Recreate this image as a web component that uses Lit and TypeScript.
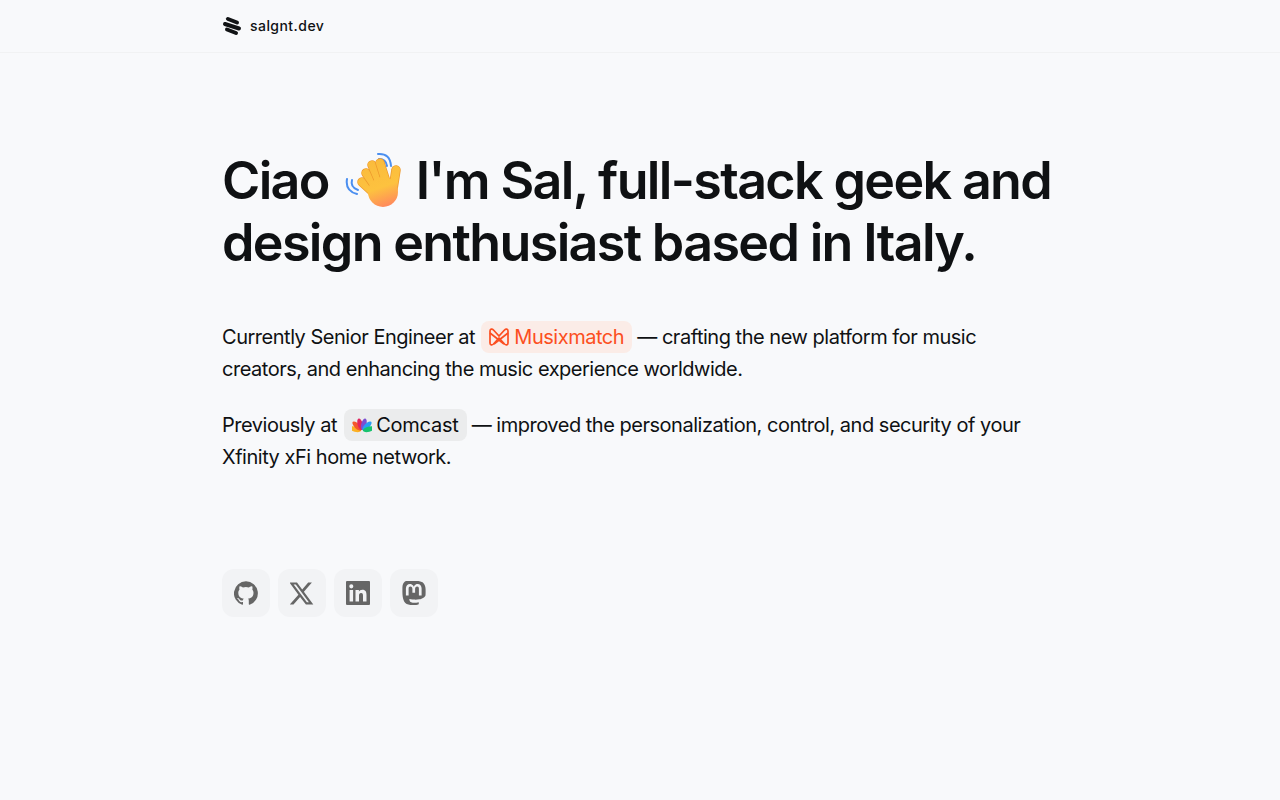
import { LitElement, html, css, svg } from 'lit';
import { customElement } from 'lit/decorators.js';

const fingers = ['M18 33 30 44', 'M22 24 33 40', 'M28 16 37 37', 'M36 14 43 36', 'M52 21 49 40'];

const hand = html`<svg class="wave" viewBox="0 0 60 60" aria-hidden="true">
  <defs><linearGradient id="h" gradientUnits="userSpaceOnUse" x1="24" y1="12" x2="40" y2="58"><stop offset="0" stop-color="#fabb3c"/><stop offset=".6" stop-color="#fdc23f"/><stop offset="1" stop-color="#ff8a5c"/></linearGradient></defs>
  <g fill="none" stroke="#4b8ff0" stroke-width="2" stroke-linecap="round">
    <path d="M3 30Q1 42 13 45"/><path d="M8 31Q6 38 14 41"/>
    <path d="M34 5Q46 4 47 17"/><path d="M35 10Q42 10 43 17"/>
  </g>
  <g fill="none" stroke-linecap="round">
    ${fingers.map((d) => svg`<path d="${d}" stroke="#ee9a2c" stroke-width="9.500"/><path d="${d}" stroke="url(#h)" stroke-width="8"/>`)}
  </g>
  <circle cx="39" cy="43" r="15" fill="url(#h)"/>
</svg>`;

const feathers = ['#fbb124', '#f5562c', '#e0245e', '#7a4fd1', '#2a9df4', '#17c26e'];

@customElement('app-root')
export class AppRoot extends LitElement {
  static styles = css`
    :host { display: block; min-height: 800px; background: #f8f9fb; color: #0f1113; font-family: Inter, 'Liberation Sans', sans-serif; }
    .top { height: 52px; border-bottom: 1px solid #f1f2f3; }
    .inner { width: 836px; margin: 0 auto; }
    .brand { height: 52px; display: flex; align-items: center; gap: 8px; font-size: 14px; font-weight: 500; letter-spacing: .45px; }
    .brand span { margin-top: -2px; }
    .brand svg { width: 20px; height: 20px; }
    main { padding-top: 96px; }
    h1 { margin: 0; font-size: 52px; line-height: 62px; font-weight: 600; letter-spacing: -1.65px; }
    .wave { width: 60px; height: 60px; margin-left: 4px; vertical-align: -10px; }
    .copy { margin-top: 47px; font-size: 20px; line-height: 32px; letter-spacing: -.48px; }
    .copy p { margin: 0 0 24px; }
    .pill { display: inline-flex; align-items: center; gap: 5px; height: 32px; padding: 0 8px; border-radius: 8px; vertical-align: top; }
    .pill svg { width: 20px; height: 20px; }
    .mm { background: #fbece7; color: #fc4f21; margin-left: 1px; }
    .cc { background: #ebeced; color: #0d0e10; gap: 4px; margin-left: 2px; letter-spacing: -.25px; }
    .links { display: flex; gap: 8px; margin-top: 96px; }
    .links a { width: 48px; height: 48px; border-radius: 12px; background: #f2f3f5; display: flex; align-items: center; justify-content: center; color: #666; }
    .links svg { width: 24px; height: 24px; fill: currentColor; }
  `;

  render() {
    return html`
      <header class="top"><div class="inner brand">
        <svg viewBox="0 0 20 20" fill="none" stroke="#111315" stroke-width="4" stroke-linecap="round"><path d="M6 3 15 6.500"/><path d="M3 8 17 12.500"/><path d="M5 13.500 14 17"/></svg>
        <span>salgnt.dev</span></div></header>
      <main class="inner">
        <h1>Ciao ${hand} I'm Sal, full-stack geek and design enthusiast based in Italy.</h1>
        <div class="copy">
          <p>Currently Senior Engineer at <span class="pill mm"><svg viewBox="0 0 20 20" fill="none" stroke="currentColor" stroke-width="1.700"><path d="M1 4C1 2 3 1.500 4.500 3L10 9l5.500-6C17 1.500 19 2 19 4v12c0 2-2 2.500-3.500 1L10 11l-5.500 6C3 18.500 1 18 1 16z"/><path d="M1 6 15 17M19 6 5 17"/></svg>Musixmatch</span> — crafting the new platform for music creators, and enhancing the music experience worldwide.</p>
          <p>Previously at <span class="pill cc"><svg viewBox="0 0 20 20">${feathers.map((c, i) => svg`<ellipse cx="10" cy="9" rx="2.600" ry="6" fill="${c}" transform="rotate(${-75 + i * 30} 10 16)"/>`)}</svg>Comcast</span> — improved the personalization, control, and security of your Xfinity xFi home network.</p>
        </div>
        <nav class="links">
          <a><svg viewBox="0 0 24 24"><path d="M12 .3a12 12 0 0 0-3.800 23.400c.6.1.8-.3.8-.6v-2c-3.300.7-4-1.600-4-1.600-.6-1.400-1.400-1.800-1.400-1.800-1-.7.1-.7.1-.7 1.200.1 1.800 1.200 1.800 1.200 1 1.800 2.800 1.300 3.500 1 .1-.8.4-1.300.8-1.600-2.700-.3-5.500-1.300-5.500-5.900 0-1.300.5-2.400 1.200-3.200-.1-.3-.5-1.500.1-3.200 0 0 1-.3 3.300 1.200a11.500 11.500 0 0 1 6 0c2.300-1.500 3.300-1.200 3.300-1.200.6 1.700.2 2.900.1 3.200.8.8 1.200 1.900 1.200 3.200 0 4.600-2.800 5.600-5.500 5.900.4.400.8 1.100.8 2.200v3.300c0 .3.2.7.8.6A12 12 0 0 0 12 .3z"/></svg></a>
          <a><svg viewBox="0 0 24 24"><path d="M18.200 1.500h3.700l-8 9.200 9.400 12.800h-7.400l-5.800-7.600-6.600 7.600H-.2l8.600-9.800L-.6 1.500H7l5.200 7zm-1.300 19.800h2L5.800 3.600H3.600z"/></svg></a>
          <a><svg viewBox="0 0 24 24"><path d="M23 0H1a1 1 0 0 0-1 1v22a1 1 0 0 0 1 1h22a1 1 0 0 0 1-1V1a1 1 0 0 0-1-1zM7.100 20.500H3.600V9h3.500zM5.300 7.400a2 2 0 1 1 0-4.100 2 2 0 0 1 0 4.100zm15.200 13.100H17v-5.600c0-1.300 0-3-1.900-3s-2.100 1.400-2.100 2.900v5.700H9.500V9h3.400v1.600c.5-.9 1.600-1.900 3.400-1.900 3.600 0 4.200 2.400 4.200 5.500z"/></svg></a>
          <a><svg viewBox="0 0 24 24"><path fill-rule="evenodd" d="M23.500 14.200c-.3 1.800-3.100 3.700-6.200 4.100-1.600.2-3.200.4-4.900.3-2.800-.1-5-.7-5-.7v.8c.4 2.800 2.800 2.900 5 3 2.300.1 4.300-.5 4.300-.5l.1 2s-1.600.9-4.500 1c-1.600.1-3.600 0-5.900-.6C1.400 22.300.5 16.800.4 11.200V6.700C.4 1 4.100 0 4.100 0 6 0 8.900 0 11.900 0h.2c3 0 5.900 0 7.800.9 0 0 3.700 1.600 3.700 7.300 0 0 .1 4.200-.1 6zM19.600 7.500c0-1.400-.4-2.500-1.100-3.300-.7-.8-1.700-1.200-2.900-1.200-1.400 0-2.500.5-3.100 1.600l-.7 1.100-.7-1.100C10.400 3.500 9.300 3 7.900 3 6.700 3 5.700 3.400 5 4.200c-.7.800-1.100 1.900-1.100 3.300v6.900h2.700V7.700c0-1.400.6-2.100 1.800-2.100 1.300 0 2 .9 2 2.500v3.600h2.700V8.100c0-1.600.7-2.500 2-2.500 1.200 0 1.800.7 1.800 2.100v6.700h2.700z"/></svg></a>
        </nav>
      </main>`;
  }
}
